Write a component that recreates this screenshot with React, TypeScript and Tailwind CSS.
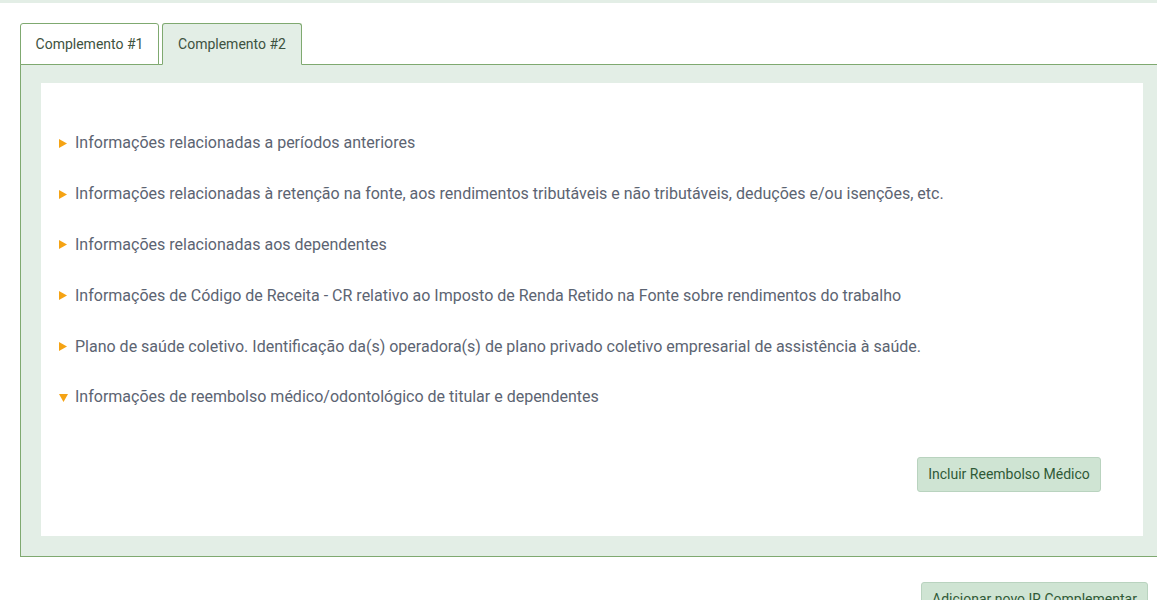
import React, { useState } from "react";

const sections = [
  "Informações relacionadas a períodos anteriores",
  "Informações relacionadas à retenção na fonte, aos rendimentos tributáveis e não tributáveis, deduções e/ou isenções, etc.",
  "Informações relacionadas aos dependentes",
  "Informações de Código de Receita - CR relativo ao Imposto de Renda Retido na Fonte sobre rendimentos do trabalho",
  "Plano de saúde coletivo. Identificação da(s) operadora(s) de plano privado coletivo empresarial de assistência à saúde.",
  "Informações de reembolso médico/odontológico de titular e dependentes",
];

function Caret({ open }: { open: boolean }) {
  return (
    <svg width="9" height="9" viewBox="0 0 9 9" className="shrink-0">
      {open ? <polygon points="0,1 9,1 4.5,9" fill="#f5a314" /> : <polygon points="0,0 8,4.5 0,9" fill="#f5a314" />}
    </svg>
  );
}

export default function App() {
  const [tab, setTab] = useState(1);
  const [open, setOpen] = useState<number>(5);

  return (
    <div className="w-[1157px] h-[600px] overflow-hidden bg-white font-['Roboto',sans-serif]">
      <div className="h-[3px] bg-[#e3eee6]" />

      {/* Tabs */}
      <div className="ml-5 mt-5 flex gap-[3px]">
        {["Complemento #1", "Complemento #2"].map((t, i) => (
          <button
            key={t}
            onClick={() => setTab(i)}
            className={
              "relative z-10 h-[42px] border border-[#7fa970] rounded-t-[3px] text-[14px] text-[#3d5241] " +
              (i === 0 ? "w-[139px] " : "w-[140px] ") +
              (tab === i ? "bg-[#e3eee6] border-b-[#e3eee6]" : "bg-white")
            }
          >
            {t}
          </button>
        ))}
      </div>

      {/* Panel */}
      <div className="ml-5 -mt-px border-t border-l border-b border-[#7fa970] bg-[#e3eee6] pl-5 pr-[14px] pt-[18px] pb-5">
        <div className="bg-white h-[453px] pl-[18px] pr-[42px] pt-[35px] flex flex-col">
          {sections.map((s, i) => (
            <div
              key={s}
              onClick={() => setOpen(open === i ? -1 : i)}
              className="h-[50.8px] flex items-center gap-[7px] cursor-pointer text-[16px] text-[#5c6472]"
            >
              <Caret open={open === i} />
              <span>{s}</span>
            </div>
          ))}
          <div className="mt-[34px] flex justify-end">
            <button className="h-[35px] px-[10px] w-[184px] rounded-[3px] border border-[#b9d3bf] bg-[#cfe4d3] text-[14px] text-[#2f5a37]">
              Incluir Reembolso Médico
            </button>
          </div>
        </div>
      </div>

      <div className="flex justify-end pr-[9px] mt-[25px]">
        <button className="h-[35px] w-[227px] rounded-[3px] border border-[#b9d3bf] bg-[#cfe4d3] text-[14px] text-[#2f5a37]">
          Adicionar novo IR Complementar
        </button>
      </div>
    </div>
  );
}
